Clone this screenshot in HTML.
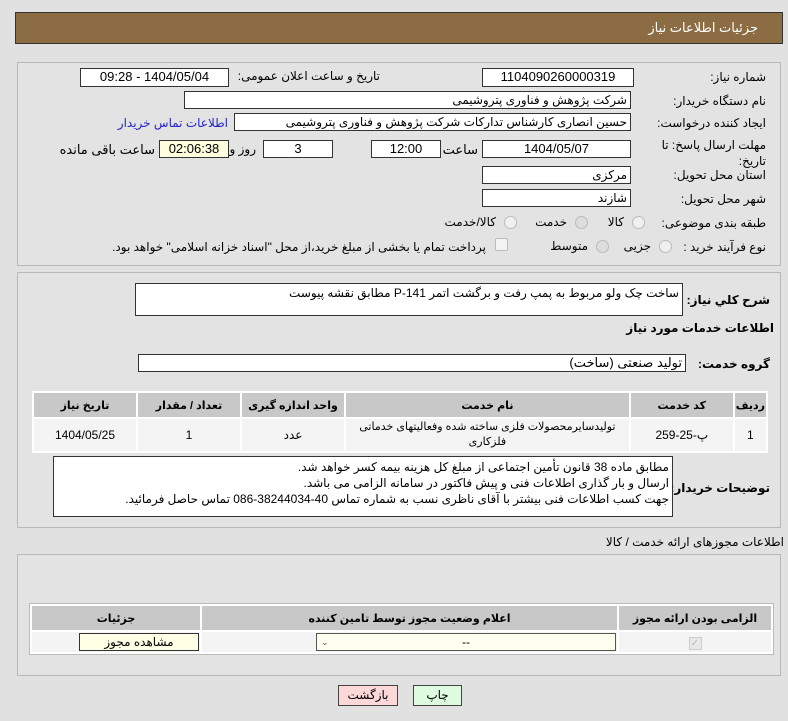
<!DOCTYPE html>
<html><head><meta charset="utf-8"><style>
body{margin:0;width:788px;height:721px;background:#e1e1e1;font-family:"Liberation Sans","DejaVu Sans",sans-serif;font-size:12px;color:#000;position:relative;overflow:hidden}
.a{position:absolute;white-space:nowrap}
.r{direction:rtl;text-align:right}
.in{position:absolute;background:#fff;border:1px solid #333;box-sizing:border-box;direction:rtl;padding:0 3px;line-height:16px;white-space:nowrap;overflow:hidden}
.c{text-align:center}
.panel{position:absolute;border:1px solid #b8b8b8;background:#e3e3e3;box-sizing:border-box}
table{border-collapse:separate;border-spacing:2px;position:absolute;background:#fff;direction:rtl}
th{background:#c8c8c8;font-weight:bold;font-size:11px;height:22px}
td{background:#f4f4f4;text-align:center;font-size:12px}
.rad{display:inline-block;width:11px;height:11px;border-radius:50%;border:1px solid #bbb;background:#f0f0f0;vertical-align:middle}
.b{font-weight:bold;font-size:12px}
</style></head><body>
<div class="a" style="left:15px;top:12px;width:768px;height:32px;background:#8b6c43;border:1px solid #333;box-sizing:border-box"></div>
<div class="a r" style="right:30px;top:20px;color:#fff;font-size:13px">جزئیات اطلاعات نیاز</div>

<div class="panel" style="left:17px;top:62px;width:764px;height:204px"></div>
<div class="a r" style="right:22px;top:70px">شماره نیاز:</div>
<div class="in c" style="left:482px;top:68px;width:152px;height:19px;font-size:13px">1104090260000319</div>
<div class="a r" style="right:408px;top:69px">تاریخ و ساعت اعلان عمومی:</div>
<div class="in c" style="left:80px;top:68px;width:149px;height:19px;font-size:13px">1404/05/04 - 09:28</div>

<div class="a r" style="right:22px;top:94px">نام دستگاه خریدار:</div>
<div class="in" style="left:184px;top:91px;width:447px;height:18px">شرکت پژوهش و فناوری پتروشیمی</div>

<div class="a r" style="right:22px;top:116px">ایجاد کننده درخواست:</div>
<div class="in" style="left:234px;top:113px;width:397px;height:18px">حسین انصاری کارشناس تدارکات شرکت پژوهش و فناوری پتروشیمی</div>
<div class="a r" style="right:560px;top:116px;color:#2323c8">اطلاعات تماس خریدار</div>

<div class="a r" style="right:22px;top:137px;line-height:16px">مهلت ارسال پاسخ: تا<br>تاریخ:</div>
<div class="in c" style="left:482px;top:140px;width:149px;height:18px;font-size:13px">1404/05/07</div>
<div class="a r" style="right:310px;top:142px;font-size:13px">ساعت</div>
<div class="in c" style="left:371px;top:140px;width:70px;height:18px;font-size:13px">12:00</div>
<div class="in c" style="left:263px;top:140px;width:70px;height:18px;font-size:13px">3</div>
<div class="a r" style="right:532px;top:142px;font-size:12px">روز و</div>
<div class="in c" style="left:159px;top:140px;width:70px;height:18px;background:#ffffe0;font-size:13px">02:06:38</div>
<div class="a r" style="right:633px;top:142px;font-size:13px">ساعت باقی مانده</div>

<div class="a r" style="right:22px;top:168px">استان محل تحویل:</div>
<div class="in" style="left:482px;top:166px;width:149px;height:18px">مرکزی</div>
<div class="a r" style="right:22px;top:192px">شهر محل تحویل:</div>
<div class="in" style="left:482px;top:189px;width:149px;height:18px">شازند</div>

<div class="a r" style="right:22px;top:216px">طبقه بندی موضوعی:</div>
<div class="a r" style="right:143px;top:215px"><span class="rad" style="margin-left:8px"></span>کالا</div>
<div class="a r" style="right:200px;top:215px"><span class="rad" style="margin-left:8px;background:#ddd"></span>خدمت</div>
<div class="a r" style="right:271px;top:215px"><span class="rad" style="margin-left:8px"></span>کالا/خدمت</div>

<div class="a r" style="right:22px;top:240px">نوع فرآیند خرید :</div>
<div class="a r" style="right:116px;top:239px"><span class="rad" style="margin-left:8px"></span>جزیی</div>
<div class="a r" style="right:179px;top:239px"><span class="rad" style="margin-left:8px;background:#ddd"></span>متوسط</div>
<div class="a r" style="right:302px;top:240px">پرداخت تمام یا بخشی از مبلغ خرید،از محل "اسناد خزانه اسلامی" خواهد بود.</div>
<div class="a" style="left:495px;top:238px;width:11px;height:11px;border:1px solid #bbb;background:#f3f3f3;border-radius:2px"></div>

<div class="panel" style="left:17px;top:272px;width:764px;height:256px"></div>
<div class="a r b" style="right:18px;top:293px">شرح کلي نیاز:</div>
<div class="in" style="left:135px;top:283px;width:548px;height:33px;line-height:18px">ساخت چک ولو مربوط به پمپ رفت و برگشت اتمر P-141 مطابق نقشه پیوست</div>
<div class="a r b" style="right:14px;top:321px">اطلاعات خدمات مورد نیاز</div>
<div class="a r b" style="right:18px;top:357px">گروه خدمت:</div>
<div class="in" style="left:138px;top:354px;width:548px;height:18px;font-size:13px">تولید صنعتی (ساخت)</div>

<table style="left:32px;top:391px;width:736px;height:57px;background:#fff">
<tr><th style="width:25px">ردیف</th><th style="width:100px">کد خدمت</th><th>نام خدمت</th><th style="width:100px">واحد اندازه گیری</th><th style="width:100px">تعداد / مقدار</th><th style="width:100px">تاریخ نیاز</th></tr>
<tr><td>1</td><td>پ-25-259</td><td style="line-height:15px;font-size:11px">تولیدسایرمحصولات فلزی ساخته شده وفعالیتهای خدماتی<br>فلزکاری</td><td>عدد</td><td>1</td><td>1404/05/25</td></tr>
</table>

<div class="a r b" style="right:18px;top:481px">توضیحات خریدار:</div>
<div class="in" style="left:53px;top:456px;width:620px;height:61px;line-height:16px;padding-top:2px">مطابق ماده 38 قانون تأمین اجتماعی از مبلغ کل هزینه بیمه کسر خواهد شد.<br>ارسال و بار گذاری اطلاعات فنی و پیش فاکتور در سامانه الزامی می باشد.<br>جهت کسب اطلاعات فنی بیشتر با آقای ناظری نسب به شماره تماس  40-38244034-086 تماس حاصل فرمائید.</div>

<div class="a r" style="right:4px;top:535px">اطلاعات مجوزهای ارائه خدمت / کالا</div>
<div class="panel" style="left:17px;top:554px;width:764px;height:122px"></div>
<table style="left:29px;top:603px;width:745px;height:52px;background:#fff;border:1px solid #bbb">
<tr><th style="width:150px">الزامی بودن ارائه مجوز</th><th>اعلام وضعیت مجوز توسط تامین کننده</th><th style="width:166px">جزئیات</th></tr>
<tr><td><span style="display:inline-block;width:11px;height:11px;border:1px solid #ccc;background:#e8e8e8;color:#bbb;font-size:10px;line-height:11px">✓</span></td><td style="position:relative"><div class="in" style="position:relative;margin-left:58px;width:300px;height:18px;background:#fffff0;border-color:#555;line-height:16px">--<span style="position:absolute;left:4px;font-size:9px;color:#555">⌄</span></div></td><td><div class="in c" style="position:relative;margin-left:23px;width:120px;height:18px;background:#ffffe5">مشاهده مجوز</div></td></tr>
</table>

<div class="in c" style="left:338px;top:685px;width:60px;height:21px;background:#fcd8d8;border-color:#444;line-height:19px">بازگشت</div>
<div class="in c" style="left:413px;top:685px;width:49px;height:21px;background:#e0fce0;border-color:#444;line-height:19px">چاپ</div>
</body></html>
